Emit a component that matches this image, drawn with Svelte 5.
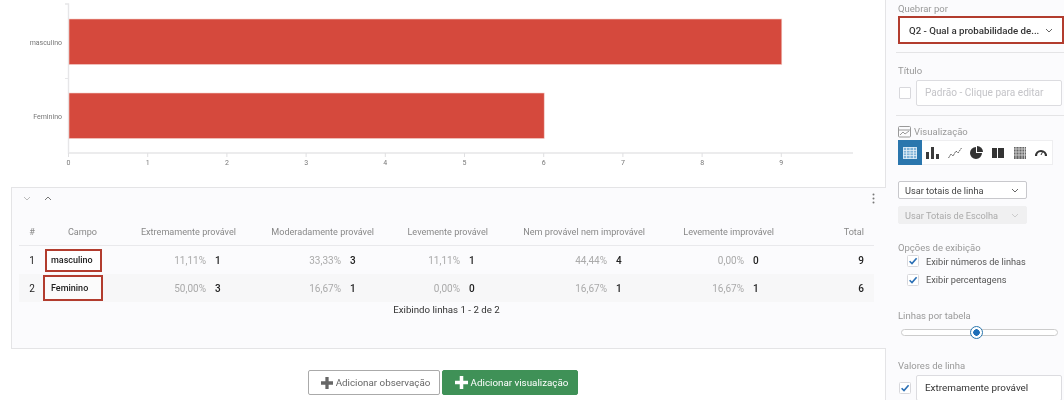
<script lang="ts">
	const ticks = [0, 1, 2, 3, 4, 5, 6, 7, 8, 9];
	const unit = 79.2;
	const bars = [
		{ label: 'masculino', value: 9, y: 19 },
		{ label: 'Feminino', value: 6, y: 93 }
	];
	const headers = [
		'Extremamente provável',
		'Moderadamente provável',
		'Levemente provável',
		'Nem provável nem improvável',
		'Levemente improvável'
	];
	const rows = [
		{
			n: 1,
			campo: 'masculino',
			cells: [['11,11%', 1], ['33,33%', 3], ['11,11%', 1], ['44,44%', 4], ['0,00%', 0]],
			total: 9
		},
		{
			n: 2,
			campo: 'Feminino',
			cells: [['50,00%', 3], ['16,67%', 1], ['0,00%', 0], ['16,67%', 1], ['16,67%', 1]],
			total: 6
		}
	];
</script>

{#snippet check()}
	<svg viewBox="0 0 12 12" width="12" height="12">
		<rect x="0.5" y="0.5" width="11" height="11" rx="1" fill="#fff" stroke="#d8d8dc" />
		<path d="M2.6 6.2 L5 8.6 L9.6 3.2" fill="none" stroke="#2a6fb5" stroke-width="1.6" />
	</svg>
{/snippet}

{#snippet chevron()}
	<svg class="chev" viewBox="0 0 8 5" width="8" height="5">
		<path d="M1 1 L4 4 L7 1" fill="none" stroke="#666" stroke-width="1" />
	</svg>
{/snippet}

<div class="page">
	<main class="main">
		<div class="chart">
			<svg viewBox="0 0 885 187" width="885" height="187">
				<path d="M65 4 H68.5 V153 H853" fill="none" stroke="#e6e6e8" stroke-width="1.4" />
				<path d="M65 78.5 H68.5" stroke="#e6e6e8" />
				{#each ticks as t}
					<path d="M{68.5 + t * unit} 153 V157" stroke="#e0e0e2" />
					<text class="tick" x={68.5 + t * unit} y="165" text-anchor="middle">{t}</text>
				{/each}
				{#each bars as b}
					<rect x="69" y={b.y} width={b.value * unit} height="45.5" fill="#d5493d" stroke="#f3cfca" stroke-width="0.6" />
					<text class="tick" x="62" y={b.y + 25.5} text-anchor="end">{b.label}</text>
				{/each}
			</svg>
		</div>

		<section class="panel">
			<div class="panel-top">
				<div class="arrows">
					<svg viewBox="0 0 8 5" width="8" height="5"><path d="M1 1 L4 4 L7 1" fill="none" stroke="#bbb" /></svg>
					<svg viewBox="0 0 8 5" width="8" height="5"><path d="M1 4 L4 1 L7 4" fill="none" stroke="#777" /></svg>
				</div>
				<svg class="dots" viewBox="0 0 3 11" width="3" height="11">
					<circle cx="1.5" cy="1.5" r="1" fill="#777" />
					<circle cx="1.5" cy="5.5" r="1" fill="#777" />
					<circle cx="1.5" cy="9.5" r="1" fill="#777" />
				</svg>
			</div>

			<div class="table">
				<div class="tr head">
					<div class="center">#</div>
					<div class="center">Campo</div>
					{#each headers as h}
						<div class="th">{h}</div>
					{/each}
					<div class="total-head">Total</div>
				</div>
				{#each rows as r, i}
					<div class="tr body" class:alt={i === 1}>
						<div class="num">{r.n}</div>
						<div class="campo"><span class="marked" class:wide={i === 1}>{r.campo}</span></div>
						{#each r.cells as c}
							<div class="pct">{c[0]}</div>
							<div class="count">{c[1]}</div>
						{/each}
						<div class="total">{r.total}</div>
					</div>
				{/each}
			</div>
			<p class="paging">Exibindo linhas 1 - 2 de 2</p>
		</section>

		<div class="actions">
			<button class="btn">
				<svg viewBox="0 0 11 11" width="12" height="12"><path d="M4 0 H7 V4 H11 V7 H7 V11 H4 V7 H0 V4 H4 Z" fill="#666" /></svg>
				Adicionar observação
			</button>
			<button class="btn green">
				<svg viewBox="0 0 11 11" width="13" height="13"><path d="M4 0 H7 V4 H11 V7 H7 V11 H4 V7 H0 V4 H4 Z" fill="#fff" /></svg>
				Adicionar visualização
			</button>
		</div>
	</main>

	<aside class="side">
		<div class="group first">
			<div class="label">Quebrar por</div>
			<div class="break-select">
				<span>Q2 - Qual a probabilidade de...</span>
				{@render chevron()}
			</div>
		</div>

		<div class="group title-group">
			<div class="label">Título</div>
			<div class="check-row">
				<span class="box"></span>
				<div class="field muted">Padrão - Clique para editar</div>
			</div>
		</div>

		<div class="group viz">
			<div class="label with-icon">
				<svg viewBox="0 0 13 12" width="13" height="12">
					<rect x="0.5" y="0.5" width="12" height="10.5" rx="1" fill="none" stroke="#999" />
					<path d="M0.5 4 H12.5 M2 9 L5 6 L7 8 L11 5" fill="none" stroke="#999" />
				</svg>
				Visualização
			</div>
			<div class="toolbar">
				<span class="tool active">
					<svg viewBox="0 0 14 12" width="14" height="12">
						<rect x="0.5" y="0.5" width="13" height="11" fill="#7fb2d8" stroke="#cfe3f2" />
						<path d="M0 3.5 H14 M0 6 H14 M0 8.5 H14 M3.5 0 V12 M7 0 V12 M10.5 0 V12" stroke="#e4f0f8" stroke-width="0.8" />
					</svg>
				</span>
				<span class="tool">
					<svg viewBox="0 0 13 12" width="13" height="12"><path d="M0 5 H3 V12 H0 Z M5 0 H8 V12 H5 Z M10 7 H13 V12 H10 Z" fill="#3a3a3a" /></svg>
				</span>
				<span class="tool">
					<svg viewBox="0 0 14 12" width="14" height="12">
						<path d="M0.5 11 L3 7 L5 9 L8 4 L10 6 L13.5 1" fill="none" stroke="#666" stroke-width="1" stroke-dasharray="2 0.6" />
					</svg>
				</span>
				<span class="tool">
					<svg viewBox="0 0 13 13" width="13" height="13">
						<path d="M6 1 A6 6 0 1 0 12 7 H6 Z" fill="#333" />
						<path d="M7 0 A6 6 0 0 1 13 6 H7 Z" fill="#333" />
					</svg>
				</span>
				<span class="tool">
					<svg viewBox="0 0 12 10" width="12" height="10"><path d="M0 0 H5 V10 H0 Z M6 0 H12 V10 H6 Z" fill="#333" /></svg>
				</span>
				<span class="tool">
					<svg viewBox="0 0 12 12" width="12" height="12">
						<rect width="12" height="12" fill="#666" />
						<path d="M0 2 H12 M0 5 H12 M0 8 H12 M2 0 V12 M5 0 V12 M8 0 V12 M10.5 0 V12" stroke="#ddd" stroke-width="0.8" />
					</svg>
				</span>
				<span class="tool">
					<svg viewBox="0 0 12 7" width="12" height="7">
						<path d="M1 7 A5 5 0 0 1 11 7" fill="none" stroke="#333" stroke-width="2.2" />
						<path d="M6 6 L8 2" stroke="#333" />
					</svg>
				</span>
			</div>
		</div>

		<div class="select">
			<span>Usar totais de linha</span>
			{@render chevron()}
		</div>
		<div class="select disabled">
			<span>Usar Totais de Escolha</span>
			{@render chevron()}
		</div>

		<div class="group options">
			<div class="label spaced">Opções de exibição</div>
			<div class="option">{@render check()}<span>Exibir números de linhas</span></div>
			<div class="option">{@render check()}<span>Exibir percentagens</span></div>
		</div>

		<div class="group lines">
			<div class="label">Linhas por tabela</div>
			<div class="slider"><span class="thumb"></span></div>
		</div>

		<div class="group values">
			<div class="label">Valores de linha</div>
			<div class="check-row">
				{@render check()}
				<div class="field strong">Extremamente provável</div>
			</div>
		</div>
	</aside>
</div>

<style>
	:global(body) {
		background: #fff;
	}

	.page {
		display: flex;
		width: 1064px;
		height: 400px;
		overflow: hidden;
		font-family: Roboto, 'Liberation Sans', sans-serif;
		filter: blur(0.4px);
		background: #fbfbfd;
	}

	.main {
		width: 886px;
		flex: none;
	}

	.chart {
		height: 187px;
		background: #fff;
		border-right: 1px solid #e4e4e6;
	}

	.chart svg {
		display: block;
	}

	.tick {
		font-size: 7px;
		fill: #777;
		font-family: Roboto, 'Liberation Sans', sans-serif;
	}

	.panel {
		display: flex;
		flex-direction: column;
		box-sizing: border-box;
		height: 162px;
		padding-left: 11px;
		background: #fff;
	}

	.panel-top,
	.table,
	.paging {
		background: #fbfbfd;
	}

	.panel-top {
		display: flex;
		justify-content: space-between;
		align-items: center;
		height: 21px;
		padding: 0 11px 0 11px;
		border: 1px solid #e4e4e6;
		border-width: 1.5px 0 0 1.5px;
	}

	.arrows {
		display: flex;
		gap: 13px;
	}

	.dots {
		margin-top: -1px;
	}

	.table {
		padding: 10px 0 0 7px;
		font-size: 10px;
		border-left: 1.5px solid #e4e4e6;
	}

	.tr {
		display: grid;
		width: 855px;
		grid-template-columns: 26px 75px 86px 40px 95px 43px 76px 38px 109px 48px 89px 40px 90px;
		align-items: center;
	}

	.head {
		height: 27px;
		color: #888;
		border-bottom: 1px solid #e9e9ec;
		box-sizing: border-box;
		font-size: 9.1px;
	}

	.center {
		text-align: center;
	}

	.th {
		grid-column: span 2;
		text-align: right;
		padding-right: 10px;
		white-space: nowrap;
	}

	.total-head {
		text-align: right;
		padding-right: 10px;
	}

	.body {
		height: 28px;
		color: #222;
	}

	.alt {
		background: #f7f7f8;
	}

	.num {
		text-align: center;
	}

	.marked {
		display: block;
		box-sizing: border-box;
		width: 57px;
		height: 23px;
		line-height: 19px;
		padding-left: 4px;
		border: 2px solid #b23c2e;
		background: #fff;
		color: #222;
		font-size: 9px;
		font-weight: 500;
	}

	.marked.wide {
		width: 60px;
		height: 26px;
		line-height: 22px;
		margin-left: -2px;
		padding-left: 6px;
		background: #fbfbfb;
	}

	.pct {
		text-align: right;
		color: #aaa;
	}

	.count {
		padding-left: 9px;
		font-weight: 500;
	}

	.total {
		text-align: right;
		padding-right: 10px;
		font-weight: 500;
	}

	.paging {
		flex: 1;
		margin: 0;
		padding: 1px 5px 0 0;
		text-align: center;
		font-size: 9.7px;
		line-height: 14px;
		color: #333;
		border: 1px solid #e4e4e6;
		border-width: 0 0 1.5px 1.5px;
	}

	.actions {
		display: flex;
		justify-content: center;
		gap: 2px;
		height: 51px;
		padding: 21px 0 0 1px;
		box-sizing: border-box;
		background: #fff;
		border-right: 1px solid #e4e4e6;
	}

	.btn {
		display: flex;
		align-items: center;
		justify-content: center;
		gap: 3px;
		height: 25px;
		width: 132px;
		padding: 0 0 0 3px;
		box-sizing: border-box;
		background: #fff;
		border: 1px solid #aaa;
		border-radius: 2px;
		color: #666;
		font-family: inherit;
		font-size: 9.8px;
	}

	.btn.green {
		width: 136px;
		background: #3f9157;
		border-color: #3f9157;
		color: #fff;
	}

	.side {
		width: 178px;
		flex: none;
		box-sizing: border-box;
		padding-left: 12px;
		font-size: 10.3px;
	}

	.group {
		padding-top: 3px;
	}

	.label {
		color: #999;
		font-size: 9.5px;
		line-height: 12px;
	}

	.label.spaced {
		margin-bottom: -2px;
	}

	.break-select {
		display: flex;
		align-items: center;
		justify-content: space-between;
		box-sizing: border-box;
		width: 166px;
		height: 28px;
		margin-top: 1px;
		padding: 0 9px 0 9px;
		background: #fff;
		border: 2px solid #b23c2e;
		font-size: 9.7px;
		font-weight: 500;
		color: #333;
		white-space: nowrap;
	}

	.first {
		height: 53px;
		box-sizing: border-box;
		border-bottom: 1px solid #e4e4e6;
		margin-left: -2px;
		padding-left: 2px;
	}

	.title-group {
		height: 63px;
		box-sizing: border-box;
		padding-top: 12px;
		border-bottom: 1px solid #e4e4e6;
		margin-left: -2px;
		padding-left: 2px;
	}

	.check-row {
		display: flex;
		align-items: center;
		gap: 5px;
		margin-top: 3px;
		margin-left: 1px;
	}

	.box {
		display: block;
		box-sizing: border-box;
		width: 12px;
		height: 12px;
		flex: none;
		background: #fff;
		border: 1px solid #d8d8dc;
		border-radius: 1px;
	}

	.field {
		box-sizing: border-box;
		width: 146px;
		height: 26px;
		line-height: 24px;
		padding-left: 8px;
		background: #fff;
		border: 1px solid #dcdce0;
		border-radius: 2px;
		color: #333;
		flex: none;
	}

	.field.muted {
		color: #c4c4c8;
		font-size: 10.1px;
	}

	.field.strong {
		font-size: 9.9px;
	}

	.viz {
		padding-top: 10px;
	}

	.with-icon {
		display: flex;
		align-items: center;
		gap: 3px;
	}

	.toolbar {
		display: flex;
		width: 155px;
		height: 25px;
		margin-top: 2px;
		box-sizing: border-box;
		background: #fff;
		border: 1px solid #eeeef0;
	}

	.tool {
		display: flex;
		align-items: center;
		justify-content: center;
		flex: 1;
	}

	.tool.active {
		flex: none;
		width: 24px;
		margin: -1px 0 -1px -1px;
		background: #2a76ad;
	}

	.select {
		display: flex;
		align-items: center;
		justify-content: space-between;
		box-sizing: border-box;
		width: 129px;
		height: 18px;
		margin-top: 16px;
		padding: 0 7px 0 6px;
		background: #fff;
		border: 1px solid #c8c8cc;
		border-radius: 2px;
		color: #444;
		font-size: 9.2px;
	}

	.select.disabled {
		margin-top: 7px;
		background: #f0f0f1;
		border-color: #f0f0f1;
		color: #aaa;
	}

	.select.disabled :global(path) {
		stroke: #ccc;
	}

	.options {
		padding-top: 18px;
	}

	.option {
		display: flex;
		align-items: center;
		gap: 7px;
		height: 18.5px;
		padding-left: 9px;
		color: #555;
		font-size: 9.2px;
	}

	.lines {
		padding-top: 21px;
	}

	.slider {
		position: relative;
		box-sizing: border-box;
		width: 157px;
		height: 7px;
		margin: 7px 0 0 3px;
		background: #fff;
		border: 1px solid #ccc;
		border-radius: 4px;
	}

	.thumb {
		position: absolute;
		left: 68px;
		top: -4px;
		box-sizing: border-box;
		width: 13px;
		height: 13px;
		background: radial-gradient(circle, #1f6fb8 0 3px, #fff 3.5px);
		border: 1px solid #2a76ad;
		border-radius: 50%;
	}

	.values {
		padding-top: 24px;
	}
</style>
